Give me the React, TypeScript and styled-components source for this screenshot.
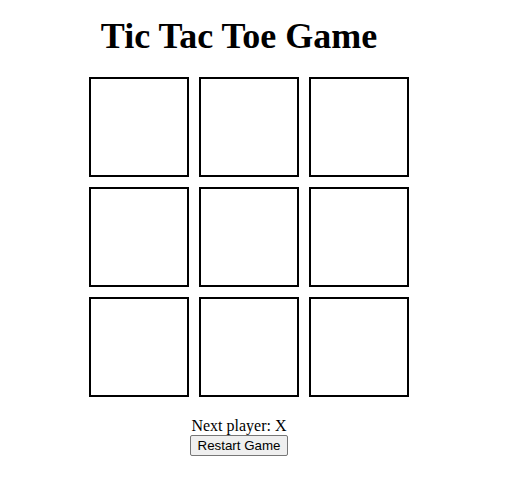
import React, { useState } from "react";
import styled, { createGlobalStyle } from "styled-components";

const Global = createGlobalStyle`
  html, body { margin: 0; padding: 0; background: #fff; }
  body { font-family: "Liberation Serif", "Times New Roman", serif; color: #000; }
`;

const Page = styled.div`
  width: 478px;
  display: flex;
  flex-direction: column;
  align-items: center;
`;

const Title = styled.h1`
  font-family: "Liberation Serif", "Times New Roman", serif;
  font-size: 36px;
  line-height: 46px;
  font-weight: bold;
  margin: 13px 0 0;
`;

const Board = styled.div`
  display: grid;
  grid-template-columns: repeat(3, 100px);
  grid-auto-rows: 100px;
  gap: 10px;
  margin-top: 18px;
  padding-left: 20px;
`;

const Cell = styled.button`
  box-sizing: border-box;
  width: 100px;
  height: 100px;
  border: 2px solid #000;
  background: #fff;
  padding: 0;
  margin: 0;
  font-family: "Liberation Serif", serif;
  font-size: 48px;
  font-weight: bold;
  cursor: pointer;
`;

const Status = styled.div`
  margin-top: 20px;
  font-size: 16px;
  line-height: 18px;
`;

const Restart = styled.button`
  font-family: "Liberation Sans", Arial, sans-serif;
  font-size: 13.333px;
  line-height: 15px;
  height: 21px;
  padding: 1px 7px;
  box-sizing: border-box;
  border: 1px solid #767676;
  border-radius: 2px;
  background: #efefef;
  color: #000;
`;

export default function App() {
  const [squares, setSquares] = useState<(string | null)[]>(Array(9).fill(null));
  const [xNext, setXNext] = useState(true);

  const click = (i: number) => {
    if (squares[i]) return;
    const next = squares.slice();
    next[i] = xNext ? "X" : "O";
    setSquares(next);
    setXNext(!xNext);
  };

  return (
    <Page>
      <Global />
      <Title>Tic Tac Toe Game</Title>
      <Board>
        {squares.map((v, i) => (
          <Cell key={i} onClick={() => click(i)}>
            {v}
          </Cell>
        ))}
      </Board>
      <Status>Next player: {xNext ? "X" : "O"}</Status>
      <Restart
        onClick={() => {
          setSquares(Array(9).fill(null));
          setXNext(true);
        }}
      >
        Restart Game
      </Restart>
    </Page>
  );
}
